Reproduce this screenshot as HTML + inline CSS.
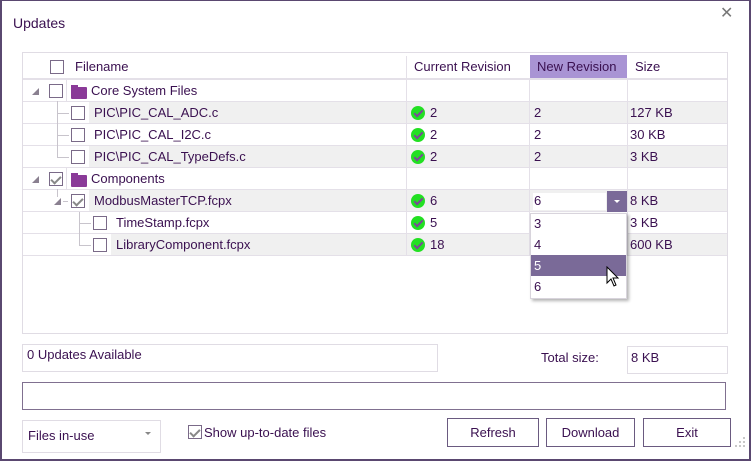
<!DOCTYPE html>
<html><head><meta charset="utf-8"><style>
*{box-sizing:border-box;margin:0;padding:0}
body{width:751px;height:461px;overflow:hidden;background:#fff;font-family:"Liberation Sans",sans-serif;font-size:13px;color:#3a1050;position:relative}
.a{position:absolute}
.win{left:0;top:0;width:751px;height:461px;border:1px solid #5a4870;border-width:1px 2px 2px 2px}
.cb{position:absolute;width:14px;height:14px;border:1px solid #7a6a88;background:#fff}
.cb.k::after{content:"";position:absolute;left:3px;top:1px;width:4px;height:8px;border:solid #888;border-width:0 2px 2px 0;transform:rotate(45deg)}
.row{position:absolute;left:23px;width:704px;height:22px;border-bottom:1px solid #e4e0e8}
.t{position:absolute;line-height:22px;white-space:nowrap}
.g{background:#f0f0f0}
.ok{position:absolute;width:14px;height:14px;border-radius:50%;background:#22e022}
.ok::after{content:"";position:absolute;left:5px;top:2px;width:3px;height:7px;border:solid #7a4a98;border-width:0 2px 2px 0;transform:rotate(45deg)}
.vl{position:absolute;width:1px;background:#e4e0e8}
.tri{position:absolute;width:0;height:0;border-left:7px solid transparent;border-bottom:7px solid #8a8090}
.fold{position:absolute;width:16px;height:12px;background:#8a3a98;border-radius:1px}
.fold::before{content:"";position:absolute;left:0;top:-2px;width:7px;height:3px;background:#8a3a98}
.btn{position:absolute;border:1px solid #6a5a80;background:#fff;text-align:center;line-height:27px;font-size:13px}
.tl{position:absolute;background:#c8c4cc}
</style></head><body>
<div class="a win"></div>
<div class="t" style="left:13px;top:12px;font-size:14px">Updates</div>
<div class="t" style="left:720px;top:3px;font-size:16px;color:#777">✕</div>

<div class="a" style="left:22px;top:52px;width:706px;height:282px;border:1px solid #e0dce4"></div>
<div class="cb" style="left:50px;top:60px"></div>
<div class="t" style="left:75px;top:56px">Filename</div>
<div class="vl" style="left:406px;top:56px;height:22px"></div>
<div class="t" style="left:414px;top:56px">Current Revision</div>
<div class="a" style="left:530px;top:55px;width:97px;height:24px;background:#a994d4"></div>
<div class="t" style="left:537px;top:56px">New Revision</div>
<div class="t" style="left:635px;top:56px">Size</div>
<div class="a" style="left:23px;top:78px;width:704px;height:2px;background:#e4e0e8"></div>

<div class="row" style="top:80px"></div>
<div class="row" style="top:102px"></div>
<div class="row" style="top:124px"></div>
<div class="row" style="top:146px"></div>
<div class="row" style="top:168px"></div>
<div class="row" style="top:190px"></div>
<div class="row" style="top:212px"></div>
<div class="row" style="top:234px"></div>
<div class="a g" style="left:89px;top:102px;width:638px;height:21px"></div>
<div class="a g" style="left:89px;top:146px;width:638px;height:21px"></div>
<div class="a g" style="left:89px;top:190px;width:638px;height:21px"></div>
<div class="a g" style="left:111px;top:234px;width:616px;height:21px"></div>
<div class="vl" style="left:406px;top:80px;height:176px"></div>
<div class="vl" style="left:529px;top:80px;height:176px"></div>
<div class="vl" style="left:627px;top:80px;height:176px"></div>
<div class="vl" style="left:66px;top:80px;height:22px"></div>
<div class="vl" style="left:66px;top:168px;height:22px"></div>

<div class="tl" style="left:57px;top:101px;width:1px;height:57px"></div>
<div class="tl" style="left:57px;top:113px;width:12px;height:1px"></div>
<div class="tl" style="left:57px;top:135px;width:12px;height:1px"></div>
<div class="tl" style="left:57px;top:157px;width:12px;height:1px"></div>
<div class="tl" style="left:57px;top:189px;width:1px;height:8px"></div>
<div class="tl" style="left:79px;top:212px;width:1px;height:34px"></div>
<div class="tl" style="left:79px;top:223px;width:12px;height:1px"></div>
<div class="tl" style="left:79px;top:245px;width:12px;height:1px"></div>
<div class="tl" style="left:63px;top:201px;width:5px;height:1px"></div>

<div class="tri" style="left:32px;top:88px"></div>
<div class="cb" style="left:49px;top:84px"></div>
<div class="fold" style="left:71px;top:87px"></div>
<div class="t" style="left:91px;top:80px">Core System Files</div>

<div class="cb" style="left:71px;top:106px"></div>
<div class="t" style="left:94px;top:102px">PIC\PIC_CAL_ADC.c</div>
<div class="ok" style="left:411px;top:106px"></div><div class="t" style="left:430px;top:102px">2</div>
<div class="t" style="left:534px;top:102px">2</div><div class="t" style="left:630px;top:102px">127 KB</div>

<div class="cb" style="left:71px;top:128px"></div>
<div class="t" style="left:94px;top:124px">PIC\PIC_CAL_I2C.c</div>
<div class="ok" style="left:411px;top:128px"></div><div class="t" style="left:430px;top:124px">2</div>
<div class="t" style="left:534px;top:124px">2</div><div class="t" style="left:630px;top:124px">30 KB</div>

<div class="cb" style="left:71px;top:150px"></div>
<div class="t" style="left:94px;top:146px">PIC\PIC_CAL_TypeDefs.c</div>
<div class="ok" style="left:411px;top:150px"></div><div class="t" style="left:430px;top:146px">2</div>
<div class="t" style="left:534px;top:146px">2</div><div class="t" style="left:630px;top:146px">3 KB</div>

<div class="tri" style="left:32px;top:176px"></div>
<div class="cb k" style="left:49px;top:172px"></div>
<div class="fold" style="left:71px;top:175px"></div>
<div class="t" style="left:91px;top:168px">Components</div>

<div class="tri" style="left:54px;top:198px"></div>
<div class="cb k" style="left:71px;top:194px"></div>
<div class="t" style="left:94px;top:190px">ModbusMasterTCP.fcpx</div>
<div class="ok" style="left:411px;top:194px"></div><div class="t" style="left:430px;top:190px">6</div>
<div class="a" style="left:533px;top:193px;width:73px;height:17px;background:#fff"></div>
<div class="t" style="left:534px;top:190px">6</div>
<div class="a" style="left:607px;top:191px;width:20px;height:21px;background:#7a6a98"></div>
<div class="a" style="left:614px;top:200px;width:0;height:0;border-left:3px solid transparent;border-right:3px solid transparent;border-top:3px solid #fff"></div>
<div class="t" style="left:630px;top:190px">8 KB</div>

<div class="cb" style="left:93px;top:216px"></div>
<div class="t" style="left:116px;top:212px">TimeStamp.fcpx</div>
<div class="ok" style="left:411px;top:216px"></div><div class="t" style="left:430px;top:212px">5</div>
<div class="t" style="left:630px;top:212px">3 KB</div>

<div class="cb" style="left:93px;top:238px"></div>
<div class="t" style="left:116px;top:234px">LibraryComponent.fcpx</div>
<div class="ok" style="left:411px;top:238px"></div><div class="t" style="left:430px;top:234px">18</div>
<div class="t" style="left:630px;top:234px">600 KB</div>

<div class="a" style="left:530px;top:213px;width:97px;height:86px;background:#fff;border:1px solid #d8d4dc;box-shadow:2px 2px 3px rgba(0,0,0,.3)"></div>
<div class="t" style="left:534px;top:213px;line-height:21px">3</div>
<div class="t" style="left:534px;top:234px;line-height:21px">4</div>
<div class="a" style="left:531px;top:255px;width:95px;height:21px;background:#7a6a98"></div>
<div class="t" style="left:534px;top:255px;line-height:21px;color:#fff">5</div>
<div class="t" style="left:534px;top:276px;line-height:21px">6</div>
<svg class="a" style="left:606px;top:266px" width="14" height="22" viewBox="0 0 14 22"><path d="M1 1 L1 17 L5 13 L8 20 L10 19 L7 12 L12 12 Z" fill="#fff" stroke="#000" stroke-width="1"/></svg>

<div class="a" style="left:22px;top:344px;width:416px;height:28px;border:1px solid #e0dce4"></div>
<div class="t" style="left:27px;top:344px">0 Updates Available</div>
<div class="t" style="left:541px;top:347px">Total size:</div>
<div class="a" style="left:627px;top:346px;width:101px;height:28px;border:1px solid #e0dce4"></div>
<div class="t" style="left:631px;top:347px">8 KB</div>
<div class="a" style="left:22px;top:382px;width:704px;height:28px;border:1px solid #807090"></div>

<div class="a" style="left:22px;top:420px;width:139px;height:33px;border:1px solid #e0dce4"></div>
<div class="t" style="left:28px;top:422px;line-height:27px">Files in-use</div>
<div class="a" style="left:145px;top:432px;width:0;height:0;border-left:3px solid transparent;border-right:3px solid transparent;border-top:3px solid #888"></div>
<div class="cb k" style="left:188px;top:425px"></div>
<div class="t" style="left:204px;top:422px;line-height:22px">Show up-to-date files</div>

<div class="btn" style="left:447px;top:418px;width:92px;height:29px">Refresh</div>
<div class="btn" style="left:546px;top:418px;width:89px;height:29px">Download</div>
<div class="btn" style="left:643px;top:418px;width:88px;height:29px">Exit</div>
<svg class="a" style="left:735px;top:437px" width="12" height="12"><g fill="#c8c8c8"><rect x="8" y="0" width="2" height="2"/><rect x="4" y="4" width="2" height="2"/><rect x="8" y="4" width="2" height="2"/><rect x="0" y="8" width="2" height="2"/><rect x="4" y="8" width="2" height="2"/><rect x="8" y="8" width="2" height="2"/></g></svg>
</body></html>
